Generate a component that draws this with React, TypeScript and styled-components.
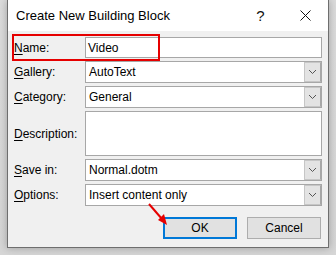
import React from "react";
import styled, { createGlobalStyle } from "styled-components";

const GlobalStyle = createGlobalStyle`
  html, body {
    margin: 0;
    padding: 0;
    background: #d9d9d9;
  }
  body {
    font-family: "Liberation Sans", Arial, sans-serif;
    font-size: 12px;
    color: #000;
  }
`;

const Stage = styled.div`
  position: relative;
  width: 336px;
  height: 255px;
  overflow: hidden;
  padding-left: 7px;
  box-sizing: border-box;
  background: linear-gradient(to bottom, #dcdcdc, #d6d6d6);
`;

const Window = styled.div`
  width: 322px;
  height: 248px;
  box-sizing: border-box;
  border: 1px solid #6e6e6e;
  border-top: 0;
  background: #f0f0f0;
  box-shadow: 0 0 8px rgba(0, 0, 0, 0.28);
  display: flex;
  flex-direction: column;
`;

const TitleBar = styled.div`
  height: 31px;
  flex: none;
  background: #ffffff;
  display: flex;
  align-items: center;
`;

const Title = styled.div`
  flex: 1;
  padding-left: 8px;
  font-size: 13px;
  white-space: nowrap;
`;

const CaptionButton = styled.div`
  width: 45px;
  height: 31px;
  display: flex;
  align-items: center;
  justify-content: center;
  font-size: 15px;
  color: #111;
`;

const Body = styled.div`
  padding: 6px 6px 0 6px;
  display: flex;
  flex-direction: column;
  gap: 3px;
`;

const Row = styled.div<{ $h: number }>`
  display: grid;
  grid-template-columns: 71px 1fr;
  height: ${(p) => p.$h}px;
`;

const Label = styled.div`
  align-self: center;
  white-space: nowrap;
`;

const Key = styled.span`
  text-decoration: underline;
  text-underline-offset: 2px;
`;

const Field = styled.div`
  box-sizing: border-box;
  background: #ffffff;
  border: 1px solid #a7a7a7;
  display: flex;
  align-items: center;
  padding-left: 2px;
  white-space: nowrap;
`;

const Combo = styled.div`
  box-sizing: border-box;
  background: #ffffff;
  border: 1px solid #a7a7a7;
  display: flex;
  align-items: stretch;
`;

const ComboValue = styled.div`
  flex: 1;
  display: flex;
  align-items: center;
  padding-left: 3px;
  white-space: nowrap;
`;

const ComboButton = styled.div`
  width: 17px;
  box-sizing: border-box;
  background: #e3e3e3;
  border: 1px solid #c6c6c6;
  border-right-color: #a7a7a7;
  display: flex;
  align-items: center;
  justify-content: center;
`;

const ButtonRow = styled.div`
  margin-top: 8px;
  display: flex;
  justify-content: flex-end;
  gap: 10px;
  padding-right: 1px;
`;

const Button = styled.div<{ $primary?: boolean }>`
  width: 74px;
  height: 22px;
  box-sizing: border-box;
  background: #e1e1e1;
  border: ${(p) => (p.$primary ? "2px solid #0078d7" : "1px solid #adadad")};
  display: flex;
  align-items: center;
  justify-content: center;
`;

const Highlight = styled.div`
  position: absolute;
  left: 12px;
  top: 34px;
  width: 148px;
  height: 27px;
  box-sizing: border-box;
  border: 2px solid #e60000;
  pointer-events: none;
`;

const ArrowLayer = styled.svg`
  position: absolute;
  left: 0;
  top: 0;
  pointer-events: none;
`;

const Chevron = () => (
  <svg width="9" height="6" viewBox="0 0 9 6">
    <path d="M1 1 L4.5 4.5 L8 1" fill="none" stroke="#555" strokeWidth="1" />
  </svg>
);

const CloseIcon = () => (
  <svg width="11" height="11" viewBox="0 0 11 11">
    <path d="M0.5 0.5 L10.5 10.5 M10.5 0.5 L0.5 10.5" stroke="#111" strokeWidth="1" />
  </svg>
);

const ComboField = ({ value }: { value: string }) => (
  <Combo>
    <ComboValue>{value}</ComboValue>
    <ComboButton>
      <Chevron />
    </ComboButton>
  </Combo>
);

export default function App() {
  return (
    <>
      <GlobalStyle />
      <Stage>
        <Window>
          <TitleBar>
            <Title>Create New Building Block</Title>
            <CaptionButton>?</CaptionButton>
            <CaptionButton>
              <CloseIcon />
            </CaptionButton>
          </TitleBar>
          <Body>
            <Row $h={21}>
              <Label>
                <Key>N</Key>ame:
              </Label>
              <Field>Video</Field>
            </Row>
            <Row $h={22}>
              <Label>
                <Key>G</Key>allery:
              </Label>
              <ComboField value="AutoText" />
            </Row>
            <Row $h={22}>
              <Label>
                <Key>C</Key>ategory:
              </Label>
              <ComboField value="General" />
            </Row>
            <Row $h={45}>
              <Label>
                <Key>D</Key>escription:
              </Label>
              <Field />
            </Row>
            <Row $h={22}>
              <Label>
                <Key>S</Key>ave in:
              </Label>
              <ComboField value="Normal.dotm" />
            </Row>
            <Row $h={22}>
              <Label>
                <Key>O</Key>ptions:
              </Label>
              <ComboField value="Insert content only" />
            </Row>
            <ButtonRow>
              <Button $primary>OK</Button>
              <Button>Cancel</Button>
            </ButtonRow>
          </Body>
        </Window>
        <Highlight />
        <ArrowLayer width="336" height="255" viewBox="0 0 336 255">
          <line x1="149" y1="204" x2="162" y2="219" stroke="#e60000" strokeWidth="2" />
          <polygon points="167,225 158,220 164,214" fill="#e60000" />
        </ArrowLayer>
      </Stage>
    </>
  );
}
